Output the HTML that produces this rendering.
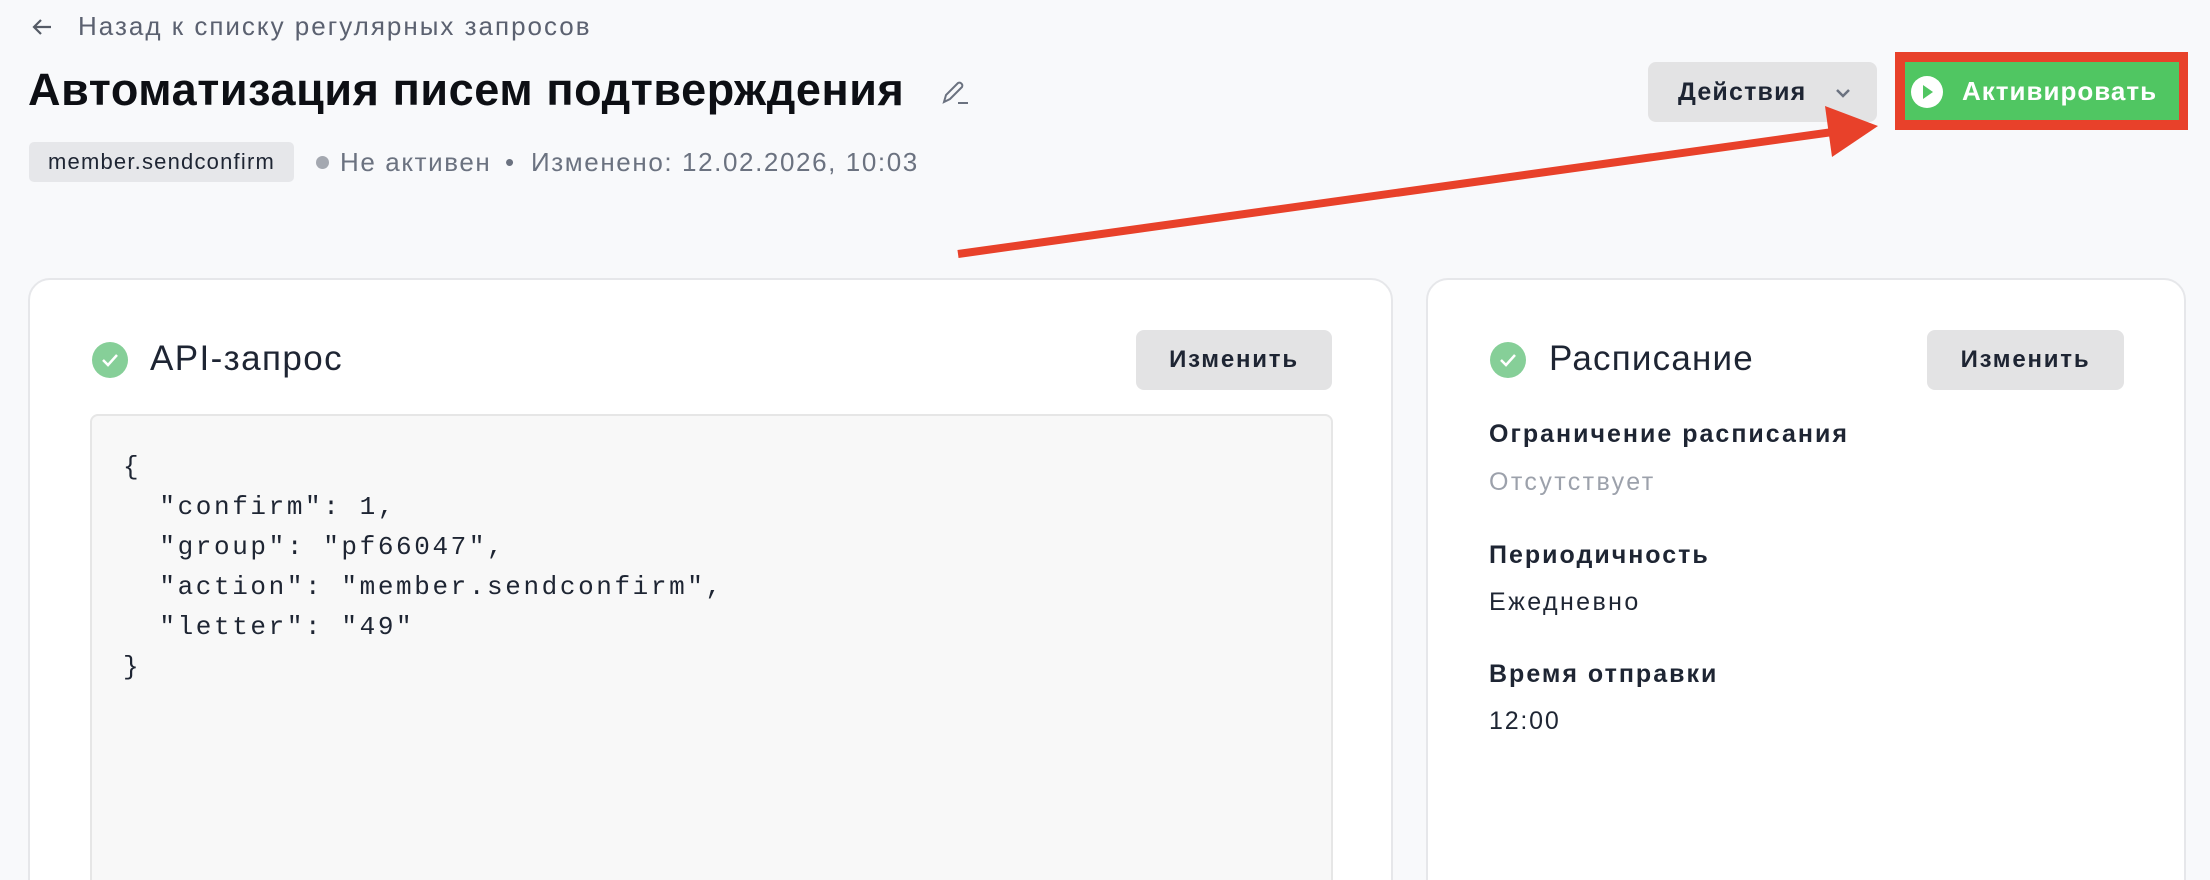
<!DOCTYPE html>
<html><head><meta charset="utf-8"><style>
*{margin:0;padding:0;box-sizing:border-box}
html{width:2210px;height:880px;overflow:hidden}
body{width:2210px;height:880px;background:#f8f9fb;font-family:"Liberation Sans",sans-serif;color:#1e2533;position:relative;overflow:hidden}
.a{position:absolute;white-space:nowrap}
.card{position:absolute;background:#fff;border:2px solid #e6e7ea;border-radius:22px}
.btn{position:absolute;background:#e3e3e4;border-radius:8px;font-weight:bold;font-size:24px;color:#1e2533;display:flex;align-items:center;justify-content:center;letter-spacing:1.8px}
.chk{position:absolute;width:36px;height:36px;border-radius:50%;background:#86cf98}
.lbl{font-weight:bold;font-size:25px;letter-spacing:2px}
.val{font-size:25px;letter-spacing:2.4px}
.code{font-family:"Liberation Mono",monospace;font-size:26px;letter-spacing:2.6px;color:#1e2533}
</style></head><body>
<svg class="a" style="left:30px;top:17px" width="24" height="20" viewBox="0 0 24 20"><path d="M21 10H4M11 3L4 10l7 7" fill="none" stroke="#555b66" stroke-width="2.2"/></svg>
<div class="a" style="left:78px;top:11px;font-size:26px;letter-spacing:2px;color:#5b6170">Назад к списку регулярных запросов</div>
<div class="a" style="left:28px;top:64px;font-size:45px;font-weight:bold;color:#0d0f14;letter-spacing:0.6px">Автоматизация писем подтверждения</div>
<svg class="a" style="left:940px;top:78px" width="32" height="30" viewBox="0 0 32 30"><path d="M4 24l2-7L18 5a3 3 0 0 1 4 4L10 21z" fill="none" stroke="#6b7280" stroke-width="2"/><path d="M18 25h10" stroke="#6b7280" stroke-width="2"/></svg>
<div class="a" style="left:29px;top:142px;width:265px;height:40px;background:#e6e7ea;border-radius:5px;font-size:22px;letter-spacing:1.2px;color:#1e2533;text-align:center;line-height:40px">member.sendconfirm</div>
<div class="a" style="left:316px;top:156px;width:13px;height:13px;border-radius:50%;background:#a4a8b0"></div>
<div class="a" style="left:340px;top:147px;font-size:26px;letter-spacing:1.6px;color:#6b7280">Не активен</div>
<div class="a" style="left:505px;top:147px;font-size:26px;color:#6b7280">•</div>
<div class="a" style="left:531px;top:147px;font-size:26px;letter-spacing:1.6px;color:#6b7280">Изменено: 12.02.2026, 10:03</div>
<div class="btn" style="left:1648px;top:62px;width:229px;height:60px;font-size:25px;justify-content:flex-start;padding-left:30px;letter-spacing:1.2px">Действия
<svg style="position:absolute;left:186px;top:25px" width="18" height="12" viewBox="0 0 18 12"><path d="M3 3l6 6 6-6" fill="none" stroke="#6b7280" stroke-width="2.5"/></svg></div>
<div class="a" style="left:1895px;top:52px;width:293px;height:78px;background:#e8412a"></div>
<div class="a" style="left:1905px;top:62px;width:274px;height:58px;background:#50c662;color:#fff;font-weight:bold;font-size:26px;letter-spacing:1px;line-height:58px;padding-left:57px">Активировать</div>
<div class="a" style="left:1911px;top:76px;width:32px;height:32px;border-radius:50%;background:#fff"></div>
<svg class="a" style="left:1911px;top:76px" width="32" height="32" viewBox="0 0 32 32"><path d="M12 9l10 7-10 7z" fill="#50c662"/></svg>
<svg class="a" style="left:0;top:0" width="2210" height="880"><line x1="958" y1="254" x2="1840" y2="131" stroke="#e8412a" stroke-width="8"/><path d="M1825 106L1878 126 1832 157z" fill="#e8412a"/></svg>
<div class="card" style="left:28px;top:278px;width:1365px;height:640px"></div>
<div class="chk" style="left:92px;top:342px"></div>
<svg class="a" style="left:92px;top:342px" width="36" height="36" viewBox="0 0 36 36"><path d="M11 18l5 5 9-10" fill="none" stroke="#fff" stroke-width="2.5"/></svg>
<div class="a" style="left:150px;top:339px;font-size:35px;letter-spacing:1.4px">API-запрос</div>
<div class="btn" style="left:1136px;top:330px;width:196px;height:60px">Изменить</div>
<div class="a" style="left:90px;top:414px;width:1243px;height:500px;background:#f8f8f8;border:2px solid #e6e6e6;border-radius:8px"></div>
<div class="a code" style="left:123px;top:447px;line-height:40px;white-space:pre">{
  "confirm": 1,
  "group": "pf66047",
  "action": "member.sendconfirm",
  "letter": "49"
}</div>
<div class="card" style="left:1426px;top:278px;width:760px;height:640px"></div>
<div class="chk" style="left:1490px;top:342px"></div>
<svg class="a" style="left:1490px;top:342px" width="36" height="36" viewBox="0 0 36 36"><path d="M11 18l5 5 9-10" fill="none" stroke="#fff" stroke-width="2.5"/></svg>
<div class="a" style="left:1549px;top:339px;font-size:35px;letter-spacing:1.2px">Расписание</div>
<div class="btn" style="left:1927px;top:330px;width:197px;height:60px">Изменить</div>
<div class="a lbl" style="left:1489px;top:420px">Ограничение расписания</div>
<div class="a val" style="left:1489px;top:468px;color:#9ca1ab">Отсутствует</div>
<div class="a lbl" style="left:1489px;top:541px">Периодичность</div>
<div class="a val" style="left:1489px;top:588px">Ежедневно</div>
<div class="a lbl" style="left:1489px;top:660px">Время отправки</div>
<div class="a val" style="left:1489px;top:707px;letter-spacing:1.8px">12:00</div>
</body></html>
